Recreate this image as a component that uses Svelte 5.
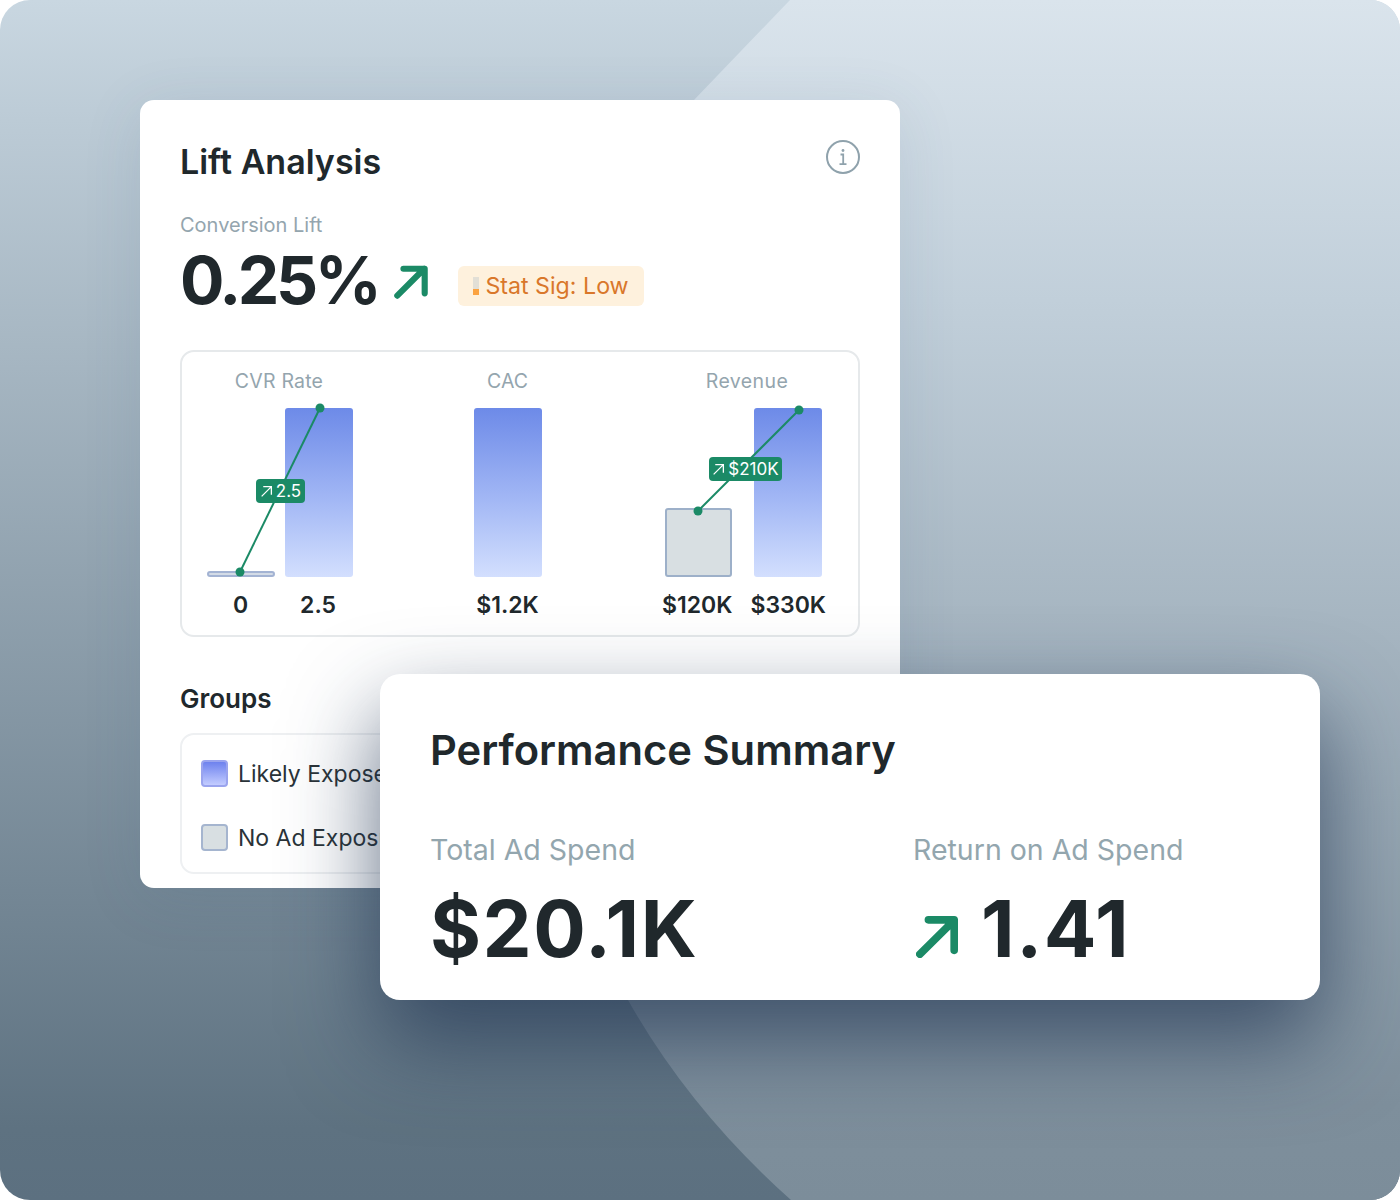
<script>
  const charts = [
    { label: 'CVR Rate', cls: 'cvr', values: ['0', '2.5'] },
    { label: 'CAC', cls: 'cac', values: ['$1.2K'] },
    { label: 'Revenue', cls: 'rev', values: ['$120K', '$330K'] }
  ];
</script>

<div class="scene">
  <svg class="shape" viewBox="0 0 1400 1200" aria-hidden="true">
    <defs>
      <linearGradient id="lg" x1="0" y1="0" x2="0" y2="1">
        <stop offset="0" stop-color="#dae4ec" />
        <stop offset="0.25" stop-color="#c1cfda" />
        <stop offset="0.92" stop-color="#7e8f9c" />
        <stop offset="1" stop-color="#7c8d9a" />
      </linearGradient>
    </defs>
    <path d="M790 0 L694 100 C500 330 440 720 628 1000 Q690 1110 791 1200 L1400 1200 L1400 0 Z" fill="url(#lg)" />
  </svg>

  <section class="lift">
    <header class="lift-head">
      <h2>Lift Analysis</h2>
      <svg class="info" viewBox="0 0 36 36" aria-hidden="true">
        <circle cx="18" cy="18" r="16" fill="none" stroke="#8fa2ac" stroke-width="2" />
        <circle cx="18" cy="11.5" r="1.4" fill="#8fa2ac" />
        <path d="M15.5 15.5H18.2V25M14.5 25.2H21.5" fill="none" stroke="#8fa2ac" stroke-width="1.8" />
      </svg>
    </header>
    <p class="sub">Conversion Lift</p>
    <div class="headline">
      <span class="big">0.25%</span>
      <svg class="arrow" viewBox="0 0 36 36" aria-hidden="true">
        <path d="M3.5 32.5L32 4M10 4H32.5V30" fill="none" stroke="#1b8a66" stroke-width="6.5" stroke-linecap="round" stroke-linejoin="round" />
      </svg>
      <span class="sig">
        <span class="meter"><i></i><i></i><i class="on"></i></span>
        Stat Sig: Low
      </span>
    </div>

    <div class="charts">
      {#each charts as c}
        <div class="chart {c.cls}">
          <div class="chart-label">{c.label}</div>
          <div class="bars">
            {#if c.cls === 'cvr'}
              <div class="bar flat"></div>
              <div class="bar blue"></div>
              <svg class="trend" viewBox="0 0 146 180" aria-hidden="true">
                <path d="M33 164L113 0" stroke="#1b8a66" stroke-width="2" fill="none" />
                <circle cx="33" cy="164" r="4.5" fill="#1b8a66" />
                <circle cx="113" cy="0" r="4.5" fill="#1b8a66" />
              </svg>
              <span class="delta d-cvr">
                <svg viewBox="0 0 12 12" aria-hidden="true"><path d="M1.5 10.5L10.5 1.5M3 1.5H10.5V9" fill="none" stroke="#fff" stroke-width="1.2" /></svg>
                2.5
              </span>
            {:else if c.cls === 'cac'}
              <div class="bar blue"></div>
            {:else}
              <div class="bar grey"></div>
              <div class="bar blue"></div>
              <svg class="trend" viewBox="0 0 164 180" aria-hidden="true">
                <path d="M36 103L137 2" stroke="#1b8a66" stroke-width="2" fill="none" />
                <circle cx="36" cy="103" r="4.5" fill="#1b8a66" />
                <circle cx="137" cy="2" r="4.5" fill="#1b8a66" />
              </svg>
              <span class="delta d-rev">
                <svg viewBox="0 0 12 12" aria-hidden="true"><path d="M1.5 10.5L10.5 1.5M3 1.5H10.5V9" fill="none" stroke="#fff" stroke-width="1.2" /></svg>
                $210K
              </span>
            {/if}
          </div>
          <div class="values">
            {#each c.values as v}<span>{v}</span>{/each}
          </div>
        </div>
      {/each}
    </div>

    <h3>Groups</h3>
    <div class="groups">
      <div class="group"><span class="swatch s-blue"></span>Likely Exposed</div>
      <div class="group"><span class="swatch s-grey"></span>No Ad Exposure</div>
    </div>
  </section>

  <section class="perf">
    <h2>Performance Summary</h2>
    <div class="metrics">
      <div class="metric m1">
        <p>Total Ad Spend</p>
        <div class="num">$20.1K</div>
      </div>
      <div class="metric">
        <p>Return on Ad Spend</p>
        <div class="num">
          <svg class="arrow2" viewBox="0 0 44 44" aria-hidden="true">
            <path d="M4 40L40 4.5M13 4H40V36" fill="none" stroke="#1b8a66" stroke-width="8" stroke-linecap="round" stroke-linejoin="round" />
          </svg>
          1.41
        </div>
      </div>
    </div>
  </section>
</div>

<style>
  :global(body) {
    margin: 0;
    background: #fff;
  }
  .scene {
    position: relative;
    width: 1400px;
    height: 1200px;
    border-radius: 30px;
    overflow: hidden;
    background: linear-gradient(180deg, #c9d7e1 0%, #bccbd6 10%, #5e7281 94%, #5c7080 100%);
    font-family: Inter, "Noto Sans", sans-serif;
    color: #20282c;
    padding: 100px 0 0 140px;
    box-sizing: border-box;
  }
  .shape {
    position: absolute;
    inset: 0;
    width: 100%;
    height: 100%;
  }
  h2, h3, p { margin: 0; }

  .lift {
    position: relative;
    width: 760px;
    height: 788px;
    box-sizing: border-box;
    background: #fff;
    border-radius: 14px;
    padding: 39px 40px 0;
    box-shadow: 0 10px 60px rgba(60, 90, 120, 0.12);
    overflow: hidden;
  }
  .lift-head {
    display: flex;
    justify-content: space-between;
    align-items: flex-start;
    height: 47px;
  }
  .lift-head h2 {
    font-size: 34px;
    line-height: 46px;
    font-weight: 600;
  }
  .info { width: 36px; height: 36px; margin-right: -1px; }
  .sub {
    margin-top: 27px;
    font-size: 20px;
    line-height: 24px;
    color: #94a5ae;
  }
  .headline {
    display: flex;
    align-items: center;
    height: 66px;
    margin-top: 12px;
  }
  .big {
    font-size: 66px;
    font-weight: 700;
    line-height: 66px;
    letter-spacing: -3.4px;
    margin-top: -4px;
  }
  .arrow { width: 34px; height: 34px; margin-left: 16px; }
  .sig {
    display: inline-flex;
    align-items: center;
    gap: 6px;
    height: 40px;
    margin-left: 30px;
    margin-top: 8px;
    padding: 0 15px 0 15px;
    background: #fef1dd;
    border-radius: 6px;
    color: #d9772a;
    font-size: 23.2px;
  }
  .meter { display: flex; flex-direction: column; width: 6px; }
  .meter i { height: 6px; background: #e2dfd6; }
  .meter i.on { background: #fba341; }

  .charts {
    display: flex;
    justify-content: space-between;
    height: 287px;
    box-sizing: border-box;
    margin-top: 35px;
    padding: 0 32px 0 25px;
    border: 2px solid #e6e9eb;
    border-radius: 14px;
  }
  .chart { display: flex; flex-direction: column; }
  .chart-label {
    height: 56px;
    box-sizing: border-box;
    padding-top: 16px;
    font-size: 19.5px;
    line-height: 26px;
    text-align: center;
    color: #94a5ae;
    white-space: nowrap;
  }
  .bars {
    position: relative;
    height: 169px;
    display: flex;
    align-items: flex-end;
    gap: 10px;
  }
  .rev .bars { gap: 22px; padding: 0 4px 0 3px; }
  .bar { width: 68px; box-sizing: border-box; border-radius: 3px; }
  .blue {
    height: 169px;
    background: linear-gradient(180deg, #6d8ae8 0%, #a3b8f5 55%, #d3dffe 100%);
  }
  .flat {
    height: 6px;
    background: #d3dbe6;
    border: 2px solid #a3b3d3;
  }
  .grey {
    width: 67px;
    height: 69px;
    background: #d8dfe2;
    border: 2px solid #9db0c9;
  }
  .trend {
    position: absolute;
    left: 0;
    top: 0;
    overflow: visible;
    pointer-events: none;
  }
  .cvr .trend { width: 146px; height: 180px; }
  .rev .trend { width: 164px; height: 180px; }
  .delta {
    position: absolute;
    display: flex;
    align-items: center;
    justify-content: center;
    gap: 3px;
    height: 24px;
    background: #1b8a66;
    border-radius: 4px;
    color: #fff;
    font-size: 17px;
  }
  .delta svg { width: 13px; height: 13px; }
  .d-cvr { left: 49px; top: 71px; width: 49px; }
  .d-rev { left: 47px; top: 49px; width: 73px; }
  .values {
    display: flex;
    justify-content: space-between;
    margin-top: 14px;
    font-size: 23px;
    line-height: 28px;
    font-weight: 600;
    color: #20282c;
  }
  .cvr .values { padding: 0 17px 0 26px; }
  .cac .values { justify-content: center; white-space: nowrap; margin-left: -6px; margin-right: -6px; }
  .cvr .chart-label { margin-right: 2px; letter-spacing: 0.2px; }
  .rev .chart-label { padding-left: 6px; letter-spacing: 0.4px; }

  h3 {
    margin-top: 46px;
    font-size: 26px;
    line-height: 32px;
    font-weight: 600;
  }
  .groups {
    margin-top: 18px;
    height: 141px;
    box-sizing: border-box;
    border: 2px solid #eef0f2;
    border-radius: 14px;
    padding: 25px 19px;
    display: flex;
    flex-direction: column;
    gap: 37px;
  }
  .group {
    display: flex;
    align-items: center;
    gap: 10px;
    height: 27px;
    font-size: 23px;
    color: #2a3338;
    white-space: nowrap;
  }
  .swatch {
    width: 27px;
    height: 27px;
    box-sizing: border-box;
    border-radius: 4px;
    border: 2px solid #a8b6e8;
  }
  .s-blue { background: linear-gradient(180deg, #6e82ee, #c3ccff); border-color: #9aa4ee; }
  .s-grey { background: #d8dfe2; border-color: #a5b5cf; }

  .perf {
    position: absolute;
    left: 380px;
    top: 674px;
    width: 940px;
    height: 326px;
    box-sizing: border-box;
    background: #fff;
    border-radius: 20px;
    padding: 46px 50px 0;
    box-shadow: 0 40px 90px rgba(30, 50, 80, 0.7);
  }
  .perf h2 {
    font-size: 41.7px;
    line-height: 60px;
    font-weight: 600;
  }
  .metrics { display: flex; margin-top: 52px; }
  .m1 { width: 483px; }
  .metric p {
    font-size: 28.5px;
    line-height: 36px;
    color: #93a6ae;
  }
  .num {
    display: flex;
    align-items: center;
    margin-top: 16px;
    font-size: 78px;
    line-height: 90px;
    font-weight: 700;
    letter-spacing: 1.5px;
  }
  .arrow2 { width: 42px; height: 42px; margin: 16px 23px 0 3px; }
</style>
